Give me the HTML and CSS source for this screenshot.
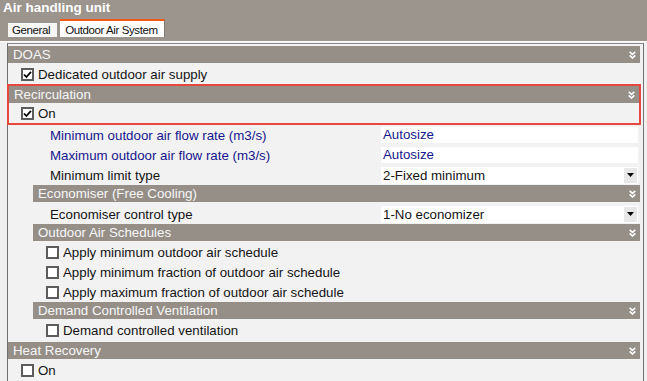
FILE: index.html
```html
<!DOCTYPE html>
<html lang="en">
<head>
<meta charset="UTF-8">
<title>Air handling unit</title>
<link rel="stylesheet" href="styles.css">
</head>
<body>
<div class="titlebar">Air handling unit</div>
<div class="tabs">
    <div class="tab">General</div>
    <div class="tab active">Outdoor Air System</div>
</div>
<div class="sheet">
<div class="panel">

    <div class="hdr">DOAS
        <svg class="chev" width="7" height="8" viewBox="0 0 7 8"><polyline points="0.7,0.8 3.5,3.4 6.3,0.8"/><polyline points="0.7,4.4 3.5,7 6.3,4.4"/></svg>
    </div>
    <div class="row lvl1">
        <span class="cb"><svg width="9" height="9" viewBox="0 0 9 9"><polyline points="1,4.5 3.4,7 8,1.8"/></svg></span>Dedicated outdoor air supply
    </div>

    <div class="highlight">
        <div class="hdr flat">Recirculation
            <svg class="chev" width="7" height="8" viewBox="0 0 7 8"><polyline points="0.7,0.8 3.5,3.4 6.3,0.8"/><polyline points="0.7,4.4 3.5,7 6.3,4.4"/></svg>
        </div>
        <div class="row lvl1 inbox">
            <span class="cb"><svg width="9" height="9" viewBox="0 0 9 9"><polyline points="1,4.5 3.4,7 8,1.8"/></svg></span>On
        </div>
    </div>

    <div class="sub">
        <div class="row">
            <span class="lbl blue">Minimum outdoor air flow rate (m3/s)</span>
            <span class="input">Autosize</span>
        </div>
        <div class="row">
            <span class="lbl blue">Maximum outdoor air flow rate (m3/s)</span>
            <span class="input">Autosize</span>
        </div>
        <div class="row">
            <span class="lbl">Minimum limit type</span>
            <span class="select">2-Fixed minimum<span class="arrow"><svg width="7" height="4" viewBox="0 0 7 4"><polygon points="0,0 7,0 3.5,4"/></svg></span></span>
        </div>

        <div class="hdr wide">Economiser (Free Cooling)
            <svg class="chev" width="7" height="8" viewBox="0 0 7 8"><polyline points="0.7,0.8 3.5,3.4 6.3,0.8"/><polyline points="0.7,4.4 3.5,7 6.3,4.4"/></svg>
        </div>
        <div class="row">
            <span class="lbl">Economiser control type</span>
            <span class="select">1-No economizer<span class="arrow"><svg width="7" height="4" viewBox="0 0 7 4"><polygon points="0,0 7,0 3.5,4"/></svg></span></span>
        </div>

        <div class="hdr">Outdoor Air Schedules
            <svg class="chev" width="7" height="8" viewBox="0 0 7 8"><polyline points="0.7,0.8 3.5,3.4 6.3,0.8"/><polyline points="0.7,4.4 3.5,7 6.3,4.4"/></svg>
        </div>
        <div class="row lvl2"><span class="cb empty"></span>Apply minimum outdoor air schedule</div>
        <div class="row lvl2"><span class="cb empty"></span>Apply minimum fraction of outdoor air schedule</div>
        <div class="row lvl2"><span class="cb empty"></span>Apply maximum fraction of outdoor air schedule</div>

        <div class="hdr">Demand Controlled Ventilation
            <svg class="chev" width="7" height="8" viewBox="0 0 7 8"><polyline points="0.7,0.8 3.5,3.4 6.3,0.8"/><polyline points="0.7,4.4 3.5,7 6.3,4.4"/></svg>
        </div>
        <div class="row lvl2"><span class="cb empty"></span>Demand controlled ventilation</div>
    </div>

    <div class="hdr gap">Heat Recovery
        <svg class="chev" width="7" height="8" viewBox="0 0 7 8"><polyline points="0.7,0.8 3.5,3.4 6.3,0.8"/><polyline points="0.7,4.4 3.5,7 6.3,4.4"/></svg>
    </div>
    <div class="row lvl1"><span class="cb empty"></span>On</div>

</div>
</div>
</body>
</html>
```

FILE: styles.css
```css
body {
    margin: 0;
    background-color: #f0f0f0;
    font-family: "Liberation Sans", Arial, sans-serif;
    font-size: 13.3px;
    color: #141414;
    height: 381px;
    overflow: hidden;
}

.titlebar {
    height: 18px;
    line-height: 16px;
    padding-left: 3px;
    background-color: #9b958e;
    color: #ffffff;
    font-weight: bold;
    font-size: 13.5px;
}

.tabs {
    height: 24px;
    box-sizing: border-box;
    display: flex;
    align-items: flex-start;
    padding-left: 8px;
    background-color: #9b958e;
    border-bottom: 1px solid #ffffff;
    font-size: 11.5px;
    letter-spacing: -0.4px;
    white-space: nowrap;
}
.tab {
    margin-top: 5px;
    height: 14px;
    line-height: 15px;
    padding: 0 7px 0 4px;
    background-color: #f6f6f6;
    color: #111;
}
.tab.active {
    margin-top: 1px;
    margin-left: 3px;
    height: 16px;
    line-height: 18px;
    padding: 0 6px 0 5px;
    background-color: #ffffff;
    border-top: 2px solid #f05a14;
    border-right: 1px solid #7f7b76;
}

.sheet {
    padding-top: 1px;
}
.panel {
    margin: 0 3px 0 7px;
    height: 340px;
    padding: 2px 3px 0 0;
    background-color: #f2f2f2;
    border: 1px solid #8a8a8a;
    border-bottom: none;
    border-left-color: #6e6e6e;
    border-right-color: #737373;
}

/* grey section bars */
.hdr {
    height: 17px;
    line-height: 17px;
    margin-bottom: 1px;
    padding: 0 4px 0 5px;
    display: flex;
    align-items: center;
    justify-content: space-between;
    background-color: #958f88;
    color: #f7f7f7;
}
.hdr.flat { margin-bottom: 0; }
.hdr.wide { margin-bottom: 2px; }
.hdr.gap { margin-top: 2px; }
.chev polyline {
    fill: none;
    stroke: #ffffff;
    stroke-width: 1.6;
}

.highlight {
    margin: 0 -1px;
    border: 2px solid #e5483f;
}

.row {
    height: 20px;
    display: flex;
    align-items: center;
    white-space: nowrap;
}
.lvl1 { padding-left: 13px; }
.lvl1.inbox { padding-left: 12px; }
.lvl2 { padding-left: 13px; }

.cb {
    width: 13px;
    height: 13px;
    box-sizing: border-box;
    margin-right: 4px;
    border: 2px solid #5c5c5c;
    background-color: #ffffff;
    display: flex;
    align-items: center;
    justify-content: center;
}
.cb polyline {
    fill: none;
    stroke: #000;
    stroke-width: 1.8;
}

.sub {
    margin-left: 25px;
}
.lbl {
    width: 331px;
    padding-left: 17px;
}
.blue { color: #16168e; }

.input {
    flex: 1;
    margin-right: 2px;
    height: 16px;
    line-height: 16px;
    padding-left: 2px;
    background-color: #ffffff;
    color: #16168e;
}
.select {
    flex: 1;
    margin-right: 2px;
    height: 17px;
    padding-left: 2px;
    display: flex;
    align-items: center;
    justify-content: space-between;
    background-color: #ffffff;
}
.arrow {
    width: 13px;
    height: 15px;
    margin-right: 1px;
    display: flex;
    align-items: center;
    justify-content: center;
    background-color: #e8e8e8;
}
```
